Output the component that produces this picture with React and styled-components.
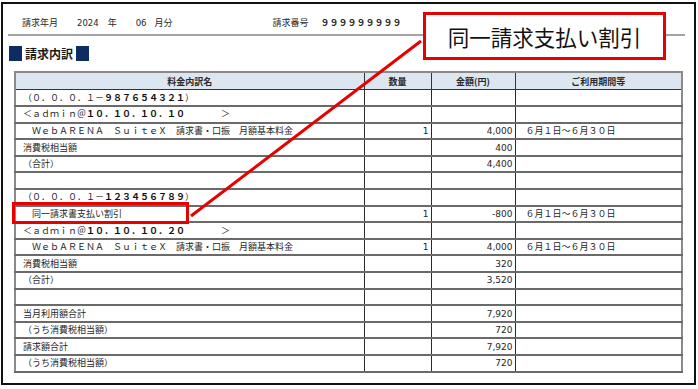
import React from 'react'
import styled, { createGlobalStyle } from 'styled-components'

const GlobalStyle = createGlobalStyle`
  body {
    margin: 0;
    background: #ffffff;
    font-family: "Noto Sans CJK JP", "Noto Sans", sans-serif;
    color: #262626;
  }
`

const Frame = styled.div`
  position: relative;
  box-sizing: border-box;
  margin: 2px 0 0 1px;
  width: 695px;
  height: 383px;
  border: 2px solid #111;
`

const Header = styled.div`
  display: flex;
  align-items: center;
  margin-left: 5px;
  width: 677px;
  padding: 13px 0 5px 14px;
  box-sizing: border-box;
  border-bottom: 2px solid #a3a3a3;
  font-size: 9px;
  line-height: 12px;
`

const HeadItem = styled.span`
  margin-left: ${p => p.$gap || 0}px;
  font-weight: ${p => (p.$bold ? 700 : 400)};
  font-family: ${p => (p.$num ? '"DejaVu Sans", sans-serif' : 'inherit')};
  font-size: ${p => (p.$num ? '8.5px' : '9px')};
`

const Title = styled.div`
  display: flex;
  align-items: center;
  gap: 3px;
  margin-top: 10px;
  padding-left: 6px;
  height: 15px;
  font-size: 12px;
  font-weight: 700;
  color: #1a1a1a;
`

const Square = styled.span`
  width: 13px;
  height: 15px;
  background: #0d2d62;
`

const Table = styled.table`
  margin: 10px 0 0 11px;
  width: 667px;
  border-collapse: collapse;
  table-layout: fixed;
  font-size: 9px;
  border: 2px solid #8a8a8a;
`

const HeadCell = styled.th`
  height: 16px;
  padding: 0;
  background: #dce6f1;
  font-weight: 700;
  text-align: center;
  color: #2a2a2a;
  border-left: 1px solid #333;
  border-bottom: 1px solid #333;
`

const Row = styled.tr`
  height: 16.6px;
`

const Cell = styled.td`
  padding: 0 ${p => (p.$align === 'right' ? '2px' : '0')} 0 ${p => p.$pad || 0}px;
  text-align: ${p => p.$align || 'left'};
  border-left: 1px solid #2a2a2a;
  border-bottom: 2px solid #6a6a6a;
  white-space: pre;
  overflow: hidden;
  line-height: 12px;
  font-family: ${p => (p.$num ? '"DejaVu Sans", sans-serif' : 'inherit')};
`

const Bold = styled.b`
  font-weight: 700;
  color: #111;
`

const Overlay = styled.div`
  position: absolute;
  left: -3px;
  top: -4px;
  width: 698px;
  height: 389px;
  pointer-events: none;
`

const Callout = styled.div`
  position: absolute;
  left: 423px;
  top: 12px;
  width: 243px;
  height: 48px;
  box-sizing: border-box;
  border: 3px solid #e60000;
  background: #fff;
  display: flex;
  align-items: center;
  justify-content: center;
  font-size: 21.5px;
  color: #111;
`

const Mark = styled.div`
  position: absolute;
  left: 12px;
  top: 202px;
  width: 177px;
  height: 22px;
  box-sizing: border-box;
  border: 3px solid #e60000;
`

const Line = styled.svg`
  position: absolute;
  left: 0;
  top: 0;
`

const rows = [
  { name: <>（０．０．０．１－<Bold>９８７６５４３２１</Bold>）</> },
  { name: <>＜ａｄｍｉｎ＠<Bold>１０．１０．１０．１０</Bold>　　　　＞</> },
  { name: '　ＷｅｂＡＲＥＮＡ　ＳｕｉｔｅＸ　請求書・口振　月額基本料金', qty: '1', amount: '4,000', period: '６月１日～６月３０日' },
  { name: '消費税相当額', amount: '400' },
  { name: '（合計）', amount: '4,400' },
  { name: '' },
  { name: <>（０．０．０．１－<Bold>１２３４５６７８９</Bold>）</> },
  { name: '　同一請求書支払い割引', qty: '1', amount: '-800', period: '６月１日～６月３０日' },
  { name: <>＜ａｄｍｉｎ＠<Bold>１０．１０．１０．２０</Bold>　　　　＞</> },
  { name: '　ＷｅｂＡＲＥＮＡ　ＳｕｉｔｅＸ　請求書・口振　月額基本料金', qty: '1', amount: '4,000', period: '６月１日～６月３０日' },
  { name: '消費税相当額', amount: '320' },
  { name: '（合計）', amount: '3,520' },
  { name: '' },
  { name: '当月利用額合計', amount: '7,920' },
  { name: '（うち消費税相当額）', amount: '720' },
  { name: '請求額合計', amount: '7,920' },
  { name: '（うち消費税相当額）', amount: '720' },
]

export default function App() {
  return (
    <>
      <GlobalStyle />
      <Frame>
        <Header>
          <HeadItem>請求年月</HeadItem>
          <HeadItem $gap={19} $num>2024</HeadItem>
          <HeadItem $gap={9}>年</HeadItem>
          <HeadItem $gap={19} $num>06</HeadItem>
          <HeadItem $gap={8}>月分</HeadItem>
          <HeadItem $gap={100}>請求番号</HeadItem>
          <HeadItem $gap={12} $bold>９９９９９９９９９</HeadItem>
        </Header>
        <Title>
          <Square />
          請求内訳
          <Square />
        </Title>
        <Table>
          <colgroup>
            <col style={{ width: 349 }} />
            <col style={{ width: 67 }} />
            <col style={{ width: 84 }} />
            <col style={{ width: 167 }} />
          </colgroup>
          <thead>
            <tr>
              <HeadCell>料金内訳名</HeadCell>
              <HeadCell>数量</HeadCell>
              <HeadCell>金額(円)</HeadCell>
              <HeadCell>ご利用期間等</HeadCell>
            </tr>
          </thead>
          <tbody>
            {rows.map((r, i) => (
              <Row key={i}>
                <Cell $pad={7}>{r.name}</Cell>
                <Cell $align="right" $num>{r.qty}</Cell>
                <Cell $align="right" $num>{r.amount}</Cell>
                <Cell $pad={10}>{r.period}</Cell>
              </Row>
            ))}
          </tbody>
        </Table>
        <Overlay>
          <Mark />
          <Line width="698" height="389">
            <line x1="421" y1="41" x2="191" y2="216" stroke="#e60000" strokeWidth="3" />
          </Line>
          <Callout>同一請求支払い割引</Callout>
        </Overlay>
      </Frame>
    </>
  )
}
